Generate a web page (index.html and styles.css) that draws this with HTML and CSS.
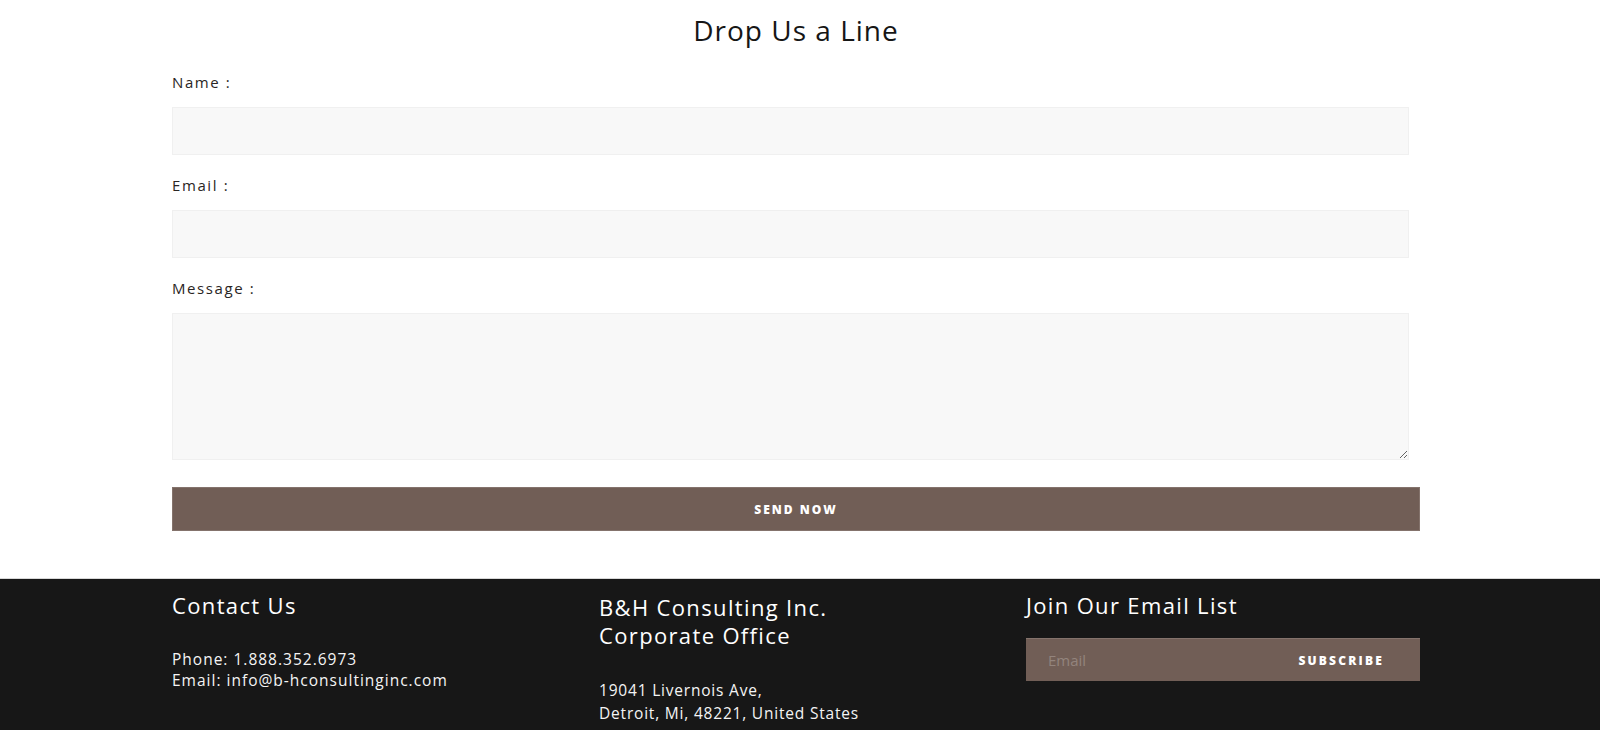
FILE: index.html
```html
<!DOCTYPE html>
<html lang="en">
<head>
<meta charset="utf-8">
<title>Drop Us a Line</title>
<link rel="stylesheet" href="styles.css">
</head>
<body>
<section class="contact">
  <div class="container">
    <h2 class="contact-title">Drop Us a Line</h2>
    <form class="contact-form">
      <div class="field">
        <label class="field-label" for="name">Name :</label>
        <input class="field-input" id="name" type="text">
      </div>
      <div class="field">
        <label class="field-label" for="email">Email :</label>
        <input class="field-input" id="email" type="email">
      </div>
      <div class="field">
        <label class="field-label" for="message">Message :</label>
        <textarea class="field-input field-textarea" id="message"></textarea>
      </div>
      <button class="send-btn" type="button">SEND NOW</button>
    </form>
  </div>
</section>
<footer class="footer">
  <div class="container footer-grid">
    <div class="footer-col">
      <h3 class="footer-heading">Contact Us</h3>
      <p class="footer-text">Phone: 1.888.352.6973<br>Email: info@b-hconsultinginc.com</p>
    </div>
    <div class="footer-col footer-col-office">
      <h3 class="footer-heading">B&amp;H Consulting Inc.<br>Corporate Office</h3>
      <p class="footer-text footer-address">19041 Livernois Ave,<br>Detroit, Mi, 48221, United States</p>
    </div>
    <div class="footer-col footer-col-subscribe">
      <h3 class="footer-heading">Join Our Email List</h3>
      <div class="subscribe">
        <input class="subscribe-input" type="email" placeholder="Email">
        <button class="subscribe-btn" type="button">SUBSCRIBE</button>
      </div>
    </div>
  </div>
</footer>
</body>
</html>
```

FILE: styles.css
```css
* { box-sizing: border-box; }
html, body { margin: 0; padding: 0; background: #fff; }
body {
  font-family: "Open Sans", "DejaVu Sans", sans-serif;
  color: #222;
  overflow: hidden;
}
.container {
  width: 1248px;
  margin-left: 172px;
}
.contact { padding: 10px 0 47px; }
.contact-title {
  margin: 0 0 20px;
  text-align: center;
  font-weight: 400;
  font-size: 28px;
  line-height: 40px;
  letter-spacing: 1px;
  color: #161616;
}
.contact-form { display: flex; flex-direction: column; }
.field { display: flex; flex-direction: column; margin-bottom: 18px; }
.field:last-of-type { margin-bottom: 27px; }
.field-label {
  font-size: 15px;
  line-height: 24px;
  letter-spacing: 1.6px;
  color: #2a2524;
  margin-bottom: 13px;
}
.field-input {
  width: 1237px;
  height: 48px;
  background: #f8f8f8;
  border: 1px solid #f0f0f0;
  margin: 0;
  font: inherit;
  outline: none;
}
.field-textarea { height: 147px; resize: vertical; }
.send-btn {
  width: 1248px;
  height: 44px;
  background: #715e56;
  border: 1px solid #84736c;
  color: #fff;
  font-family: "Open Sans", sans-serif;
  font-weight: 800;
  font-size: 12px;
  letter-spacing: 2px;
  cursor: pointer;
}
.footer {
  background: #171717;
  color: #fff;
  padding: 12px 0 40px;
  border-top: 1px solid #d8d8d8;
  height: 152px;
}
.footer-grid {
  display: grid;
  grid-template-columns: 394px 394px 394px;
  column-gap: 33px;
}
.footer-heading {
  margin: 0 0 30px;
  font-weight: 400;
  font-size: 22px;
  line-height: 28px;
  letter-spacing: 1.35px;
  color: #fff;
}
.footer-col-office .footer-heading { margin-top: 2px; }
.footer-text {
  margin: 0;
  font-size: 15.5px;
  line-height: 21px;
  letter-spacing: 1px;
  color: #f4f4f4;
}
.footer-address { line-height: 22.5px; letter-spacing: 0.8px; }
.footer-col-subscribe .footer-heading { margin-bottom: 19px; }
.subscribe {
  display: flex;
  align-items: center;
  height: 43px;
  background: #715e56;
  border-top: 1px solid #84736c;
}
.subscribe-input {
  flex: 1;
  min-width: 0;
  height: 100%;
  background: transparent;
  border: none;
  padding: 0 0 0 22px;
  font-family: "Open Sans", sans-serif;
  font-size: 15px;
  color: #fff;
  outline: none;
}
.subscribe-input::placeholder { color: #93847d; }
.subscribe-btn {
  background: transparent;
  border: none;
  color: #fff;
  font-family: "Open Sans", sans-serif;
  font-weight: 800;
  font-size: 12px;
  letter-spacing: 2.2px;
  padding: 0 36px 0 20px;
  height: 100%;
}
```
